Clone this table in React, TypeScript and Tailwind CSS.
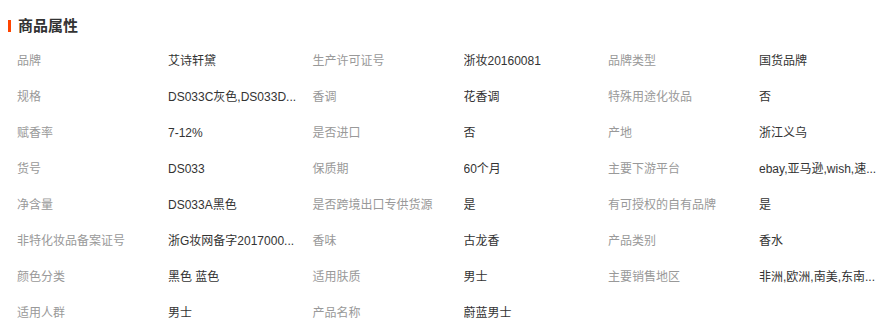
const rows: [string, string][][] = [
  [['品牌', '艾诗轩黛'], ['生产许可证号', '浙妆20160081'], ['品牌类型', '国货品牌']],
  [['规格', 'DS033C灰色,DS033D...'], ['香调', '花香调'], ['特殊用途化妆品', '否']],
  [['赋香率', '7-12%'], ['是否进口', '否'], ['产地', '浙江义乌']],
  [['货号', 'DS033'], ['保质期', '60个月'], ['主要下游平台', 'ebay,亚马逊,wish,速...']],
  [['净含量', 'DS033A黑色'], ['是否跨境出口专供货源', '是'], ['有可授权的自有品牌', '是']],
  [['非特化妆品备案证号', '浙G妆网备字2017000...'], ['香味', '古龙香'], ['产品类别', '香水']],
  [['颜色分类', '黑色 蓝色'], ['适用肤质', '男士'], ['主要销售地区', '非洲,欧洲,南美,东南...']],
  [['适用人群', '男士'], ['产品名称', '蔚蓝男士']],
];

export default function App() {
  return (
    <div className="w-[892px] h-[326px] overflow-hidden bg-white font-['Liberation_Sans','Noto_Sans_CJK_SC',sans-serif]">
      {/* section title */}
      <div className="flex items-center pt-[17px] pb-[9px] pl-[8px]">
        <span className="w-[3px] h-[12px] bg-[#ff4400]" />
        <h2 className="ml-[7px] text-[15px] leading-[17px] font-bold text-[#333]">商品属性</h2>
      </div>

      <div className="pl-[17px]">
        {rows.map((row, i) => (
          <div key={i} className="flex h-[36px] items-center text-[12px] leading-[36px]">
            {row.map(([label, value]) => (
              <div key={label} className="flex w-[295.5px] shrink-0">
                <span className="w-[151px] shrink-0 text-[#999] whitespace-nowrap">{label}</span>
                <span className="w-[130px] text-[#333] whitespace-nowrap overflow-hidden">{value}</span>
              </div>
            ))}
          </div>
        ))}
      </div>
    </div>
  );
}
